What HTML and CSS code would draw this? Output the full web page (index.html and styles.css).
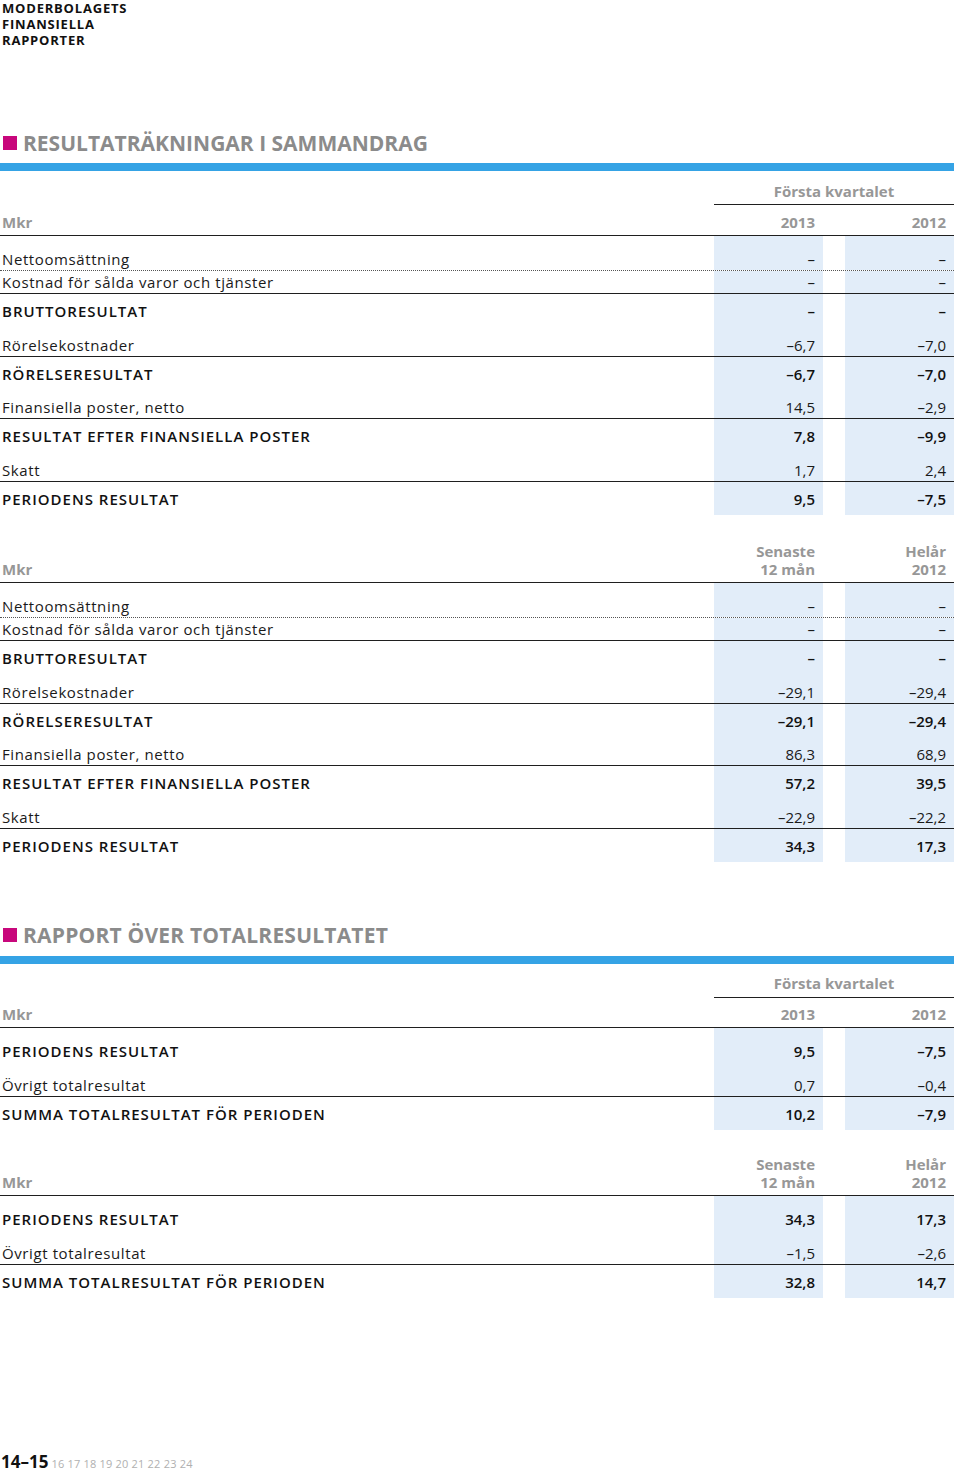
FILE: index.html
```html
<!DOCTYPE html>
<html lang="sv">
<head>
<meta charset="utf-8">
<title>Moderbolagets finansiella rapporter</title>
<link rel="stylesheet" href="styles.css">
</head>
<body>
<header class="doc-head">MODERBOLAGETS<br>FINANSIELLA<br>RAPPORTER</header>

<section class="report sec1">
  <h2 class="sec-title"><span class="sq"></span>RESULTATRÄKNINGAR I SAMMANDRAG</h2>
  <div class="bar"></div>

  <div class="tbl">
    <div class="row htop"><div></div><div class="span2">Första kvartalet</div></div>
    <div class="row hsub line"><div class="lbl">Mkr</div><div class="num">2013</div><div class="num">2012</div></div>
    <div class="row n nfirst dot"><div class="lbl">Nettoomsättning</div><div class="num">–</div><div class="num">–</div></div>
    <div class="row n nsecond line"><div class="lbl">Kostnad för sålda varor och tjänster</div><div class="num">–</div><div class="num">–</div></div>
    <div class="row b"><div class="lbl">BRUTTORESULTAT</div><div class="num">–</div><div class="num">–</div></div>
    <div class="row n line"><div class="lbl">Rörelsekostnader</div><div class="num">–6,7</div><div class="num">–7,0</div></div>
    <div class="row b"><div class="lbl">RÖRELSERESULTAT</div><div class="num">–6,7</div><div class="num">–7,0</div></div>
    <div class="row n line"><div class="lbl">Finansiella poster, netto</div><div class="num">14,5</div><div class="num">–2,9</div></div>
    <div class="row b"><div class="lbl">RESULTAT EFTER FINANSIELLA POSTER</div><div class="num">7,8</div><div class="num">–9,9</div></div>
    <div class="row n line"><div class="lbl">Skatt</div><div class="num">1,7</div><div class="num">2,4</div></div>
    <div class="row b blast"><div class="lbl">PERIODENS RESULTAT</div><div class="num">9,5</div><div class="num">–7,5</div></div>
  </div>

  <div class="tbl">
    <div class="row h2 line"><div class="lbl">Mkr</div><div class="num">Senaste<br>12 mån</div><div class="num">Helår<br>2012</div></div>
    <div class="row n nfirst dot"><div class="lbl">Nettoomsättning</div><div class="num">–</div><div class="num">–</div></div>
    <div class="row n nsecond line"><div class="lbl">Kostnad för sålda varor och tjänster</div><div class="num">–</div><div class="num">–</div></div>
    <div class="row b"><div class="lbl">BRUTTORESULTAT</div><div class="num">–</div><div class="num">–</div></div>
    <div class="row n line"><div class="lbl">Rörelsekostnader</div><div class="num">–29,1</div><div class="num">–29,4</div></div>
    <div class="row b"><div class="lbl">RÖRELSERESULTAT</div><div class="num">–29,1</div><div class="num">–29,4</div></div>
    <div class="row n line"><div class="lbl">Finansiella poster, netto</div><div class="num">86,3</div><div class="num">68,9</div></div>
    <div class="row b"><div class="lbl">RESULTAT EFTER FINANSIELLA POSTER</div><div class="num">57,2</div><div class="num">39,5</div></div>
    <div class="row n line"><div class="lbl">Skatt</div><div class="num">–22,9</div><div class="num">–22,2</div></div>
    <div class="row b blast"><div class="lbl">PERIODENS RESULTAT</div><div class="num">34,3</div><div class="num">17,3</div></div>
  </div>
</section>

<section class="report sec2">
  <h2 class="sec-title"><span class="sq"></span>RAPPORT ÖVER TOTALRESULTATET</h2>
  <div class="bar"></div>

  <div class="tbl">
    <div class="row htop"><div></div><div class="span2">Första kvartalet</div></div>
    <div class="row hsub line"><div class="lbl">Mkr</div><div class="num">2013</div><div class="num">2012</div></div>
    <div class="row b bfirst"><div class="lbl">PERIODENS RESULTAT</div><div class="num">9,5</div><div class="num">–7,5</div></div>
    <div class="row n line"><div class="lbl">Övrigt totalresultat</div><div class="num">0,7</div><div class="num">–0,4</div></div>
    <div class="row b blast"><div class="lbl">SUMMA TOTALRESULTAT FÖR PERIODEN</div><div class="num">10,2</div><div class="num">–7,9</div></div>
  </div>

  <div class="tbl">
    <div class="row h2 h2b line"><div class="lbl">Mkr</div><div class="num">Senaste<br>12 mån</div><div class="num">Helår<br>2012</div></div>
    <div class="row b bfirst"><div class="lbl">PERIODENS RESULTAT</div><div class="num">34,3</div><div class="num">17,3</div></div>
    <div class="row n line"><div class="lbl">Övrigt totalresultat</div><div class="num">–1,5</div><div class="num">–2,6</div></div>
    <div class="row b blast"><div class="lbl">SUMMA TOTALRESULTAT FÖR PERIODEN</div><div class="num">32,8</div><div class="num">14,7</div></div>
  </div>
</section>

<footer class="pager"><span class="cur">14–15</span><span class="pages">16 17 18 19 20 21 22 23 24</span></footer>
</body>
</html>
```

FILE: styles.css
```css
* { box-sizing: border-box; }

html, body {
  margin: 0;
  padding: 0;
  background: #ffffff;
}

body {
  width: 960px;
  font-family: "Open Sans", "DejaVu Sans", sans-serif;
  color: #161616;
}

.doc-head {
  margin: 0;
  padding: 0 0 0 2px;
  font-size: 13px;
  line-height: 16px;
  font-weight: 700;
  letter-spacing: 0.8px;
  color: #111;
  height: 48px;
}

.report {
  width: 954px;
}

.sec-title {
  display: flex;
  align-items: center;
  gap: 6px;
  margin: 83px 0 0 0;
  padding-left: 3px;
  font-size: 21px;
  line-height: 24px;
  font-weight: 700;
  color: #8b8b8b;
}

.sec2 .sec-title {
  margin-top: 61px;
  letter-spacing: 0.2px;
}

.sq {
  display: block;
  width: 14px;
  height: 14px;
  background: #c8077c;
  flex: none;
}

.bar {
  height: 8px;
  margin-top: 8px;
  background: #35a3e5;
}

.sec2 .bar {
  margin-top: 9px;
}

.row {
  display: grid;
  grid-template-columns: 1fr 109px 109px;
  column-gap: 22px;
  font-size: 15px;
  line-height: 18px;
}

.row > div {
  padding-top: var(--pt, 3px);
  padding-bottom: var(--pb, 2px);
}

.lbl {
  padding-left: 2px;
  white-space: nowrap;
}

.num {
  text-align: right;
  padding-right: 8px;
}

.n .lbl {
  letter-spacing: 0.6px;
}

.n .num,
.b .num {
  background: #e2edf9;
}

.line {
  border-bottom: 1px solid #1f1f1f;
}

.dot {
  border-bottom: 1px dotted #555;
}

.n {
  --pt: 3px;
  --pb: 2px;
  color: #1a1a1a;
}

.nfirst {
  --pt: 14px;
}

.nsecond {
  --pt: 2px;
}

.b {
  font-weight: 600;
  color: #111;
  --pt: 8px;
  --pb: 12.67px;
}

.b .lbl {
  letter-spacing: 1px;
}

.blast {
  --pb: 7px;
}

.bfirst {
  --pt: 14px;
  --pb: 13px;
}

/* header rows */
.htop,
.hsub,
.h2 {
  color: #979797;
  font-weight: 700;
  align-items: end;
}

.htop {
  --pt: 11px;
  --pb: 4px;
}

.sec2 .htop {
  --pt: 10px;
  --pb: 5px;
}

.htop .span2 {
  grid-column: 2 / 4;
  text-align: center;
  border-bottom: 1px solid #1f1f1f;
}

.hsub {
  --pt: 8px;
  --pb: 4px;
}

.sec2 .hsub {
  --pt: 7px;
  --pb: 4px;
}

.h2 {
  --pt: 27px;
  --pb: 4px;
}

.h2b {
  --pt: 25px;
}

.pager {
  margin-top: 156px;
  padding-left: 1px;
  display: flex;
  align-items: baseline;
  gap: 3px;
  line-height: 16px;
}

.pager .cur {
  font-size: 17px;
  font-weight: 700;
  color: #111;
}

.pager .pages {
  font-size: 11px;
  color: #b0b0b0;
  letter-spacing: 0.2px;
}
```
